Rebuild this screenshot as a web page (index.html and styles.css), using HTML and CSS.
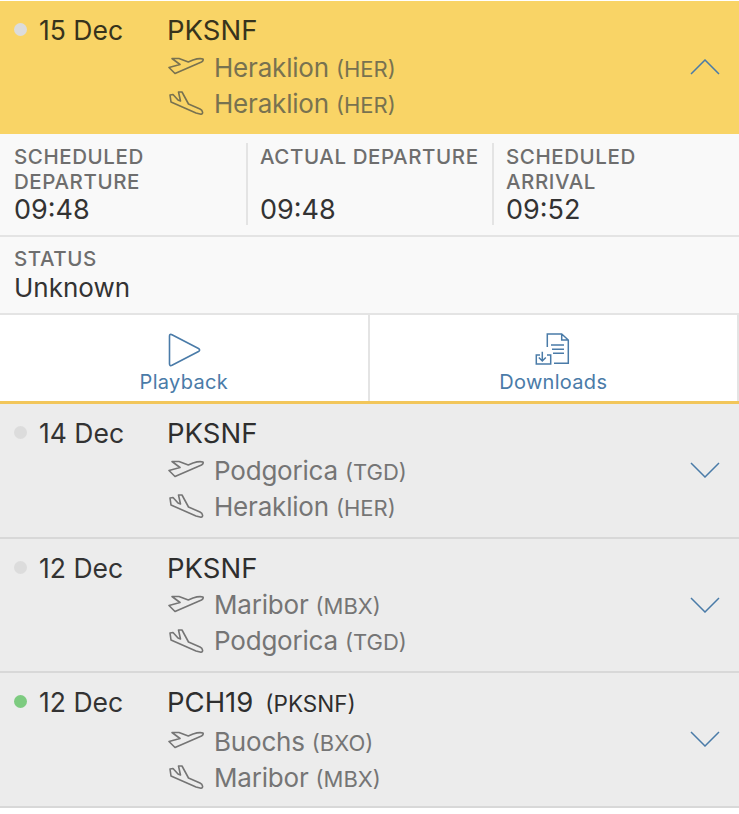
FILE: index.html
```html
<!DOCTYPE html>
<html lang="en">
<head>
<meta charset="utf-8">
<title>Flights</title>
<link rel="stylesheet" href="styles.css">
</head>
<body>
<svg class="defs" width="0" height="0" aria-hidden="true">
  <symbol id="dep" viewBox="0 0 36 20">
    <path d="M35 2 C32 1 28 2 25 3 L20.3 5 L11 1.5 L4 1.5 L12 7.5 L1 10.5 L7 16.5 L33.5 5 C35 4 35.5 3 35 2 Z" fill="none" stroke="currentColor" stroke-width="1.6" stroke-linejoin="round"/>
  </symbol>
  <symbol id="arr" viewBox="0 0 36 24">
    <path d="M2 4 L5 3.5 L10 9 L12.5 10 L10.5 1 L14 1 L20.5 13 L32 18 C35 19.5 35.5 23 33 23.2 L28 22 L3 11 Z" fill="none" stroke="currentColor" stroke-width="1.6" stroke-linejoin="round"/>
  </symbol>
  <symbol id="down" viewBox="0 0 30 16">
    <path d="M1 1 L15 15 L29 1" fill="none" stroke="currentColor" stroke-width="1.5"/>
  </symbol>
</svg>
<main class="list">
  <section class="flight open">
    <div class="when"><span class="dot grey"></span><span class="date">15 Dec</span></div>
    <div class="route">
      <div class="name">PKSNF</div>
      <div class="leg"><svg class="i-dep"><use href="#dep"/></svg><span class="city">Heraklion</span><span class="code">(HER)</span></div>
      <div class="leg"><svg class="i-arr"><use href="#arr"/></svg><span class="city">Heraklion</span><span class="code">(HER)</span></div>
    </div>
    <svg class="chev up"><use href="#down"/></svg>
  </section>
  <section class="times">
    <div class="time"><div class="label">SCHEDULED DEPARTURE</div><div class="value">09:48</div></div>
    <div class="time"><div class="label">ACTUAL DEPARTURE</div><div class="value">09:48</div></div>
    <div class="time"><div class="label">SCHEDULED ARRIVAL</div><div class="value">09:52</div></div>
  </section>
  <section class="status">
    <div class="label">STATUS</div>
    <div class="value">Unknown</div>
  </section>
  <section class="actions">
    <button class="action">
      <svg class="i-play" viewBox="0 0 34 34"><path d="M2.5 3 C2.5 1.5 3.5 1 5 1.7 L31.5 15.5 C33 16.3 33 17.7 31.5 18.5 L5 32.3 C3.5 33 2.5 32.5 2.5 31 Z" fill="none" stroke="currentColor" stroke-width="1.6" stroke-linejoin="round"/></svg>
      <span>Playback</span>
    </button>
    <button class="action">
      <svg class="i-doc" viewBox="0 0 36 34"><path d="M12.3 14 V1 H26.7 L33.3 7 V30.3 H19 M26.7 1 V7 H33.3 M16 12 H29 M17 16.3 H29 M18 20.3 H29 M5 22 H1.3 V31 H15.7 V22 H12 M7.3 18.7 V27.7 M3.8 24.5 L7.3 28 L10.8 24.5" fill="none" stroke="currentColor" stroke-width="1.5"/></svg>
      <span>Downloads</span>
    </button>
  </section>
  <section class="flight">
    <div class="when"><span class="dot grey"></span><span class="date">14 Dec</span></div>
    <div class="route">
      <div class="name">PKSNF</div>
      <div class="leg"><svg class="i-dep"><use href="#dep"/></svg><span class="city">Podgorica</span><span class="code">(TGD)</span></div>
      <div class="leg"><svg class="i-arr"><use href="#arr"/></svg><span class="city">Heraklion</span><span class="code">(HER)</span></div>
    </div>
    <svg class="chev"><use href="#down"/></svg>
  </section>
  <section class="flight">
    <div class="when"><span class="dot grey"></span><span class="date">12 Dec</span></div>
    <div class="route">
      <div class="name">PKSNF</div>
      <div class="leg"><svg class="i-dep"><use href="#dep"/></svg><span class="city">Maribor</span><span class="code">(MBX)</span></div>
      <div class="leg"><svg class="i-arr"><use href="#arr"/></svg><span class="city">Podgorica</span><span class="code">(TGD)</span></div>
    </div>
    <svg class="chev"><use href="#down"/></svg>
  </section>
  <section class="flight">
    <div class="when"><span class="dot green"></span><span class="date">12 Dec</span></div>
    <div class="route">
      <div class="name">PCH19<span class="alt">(PKSNF)</span></div>
      <div class="leg"><svg class="i-dep"><use href="#dep"/></svg><span class="city">Buochs</span><span class="code">(BXO)</span></div>
      <div class="leg"><svg class="i-arr"><use href="#arr"/></svg><span class="city">Maribor</span><span class="code">(MBX)</span></div>
    </div>
    <svg class="chev"><use href="#down"/></svg>
  </section>
</main>
</body>
</html>
```
FILE: styles.css
```css
* { box-sizing: border-box; }
html, body { margin: 0; padding: 0; background: #fff; }
body { font-family: Inter, "Liberation Sans", sans-serif; color: #333; }
.defs { position: absolute; }
.list { padding-top: 1px; width: 739px; }

.flight {
  display: flex;
  height: 134.5px;
  background: #ececec;
  border-bottom: 2px solid #d8d8d8;
  padding-left: 14px;
  padding-top: 12px;
}
.flight.open { background: #f9d466; border-bottom: 0; height: 133px; }
.when { display: flex; width: 153px; height: 34px; align-items: center; flex: none; }
.dot { width: 13px; height: 13px; border-radius: 50%; margin-right: 12px; margin-top: -1px; flex: none; }
.dot.grey { background: #dcdcdc; }
.dot.green { background: #7dcb80; }
.date { font-size: 26.5px; line-height: 34px; color: #333; }
.route { flex: 1; }
.name { font-size: 27.5px; line-height: 34px; color: #2e2e2e; margin-bottom: 2px; }
.alt { font-size: 22.5px; margin-left: 12px; }
.leg { display: flex; align-items: center; height: 36px; font-size: 26px; letter-spacing: -0.2px; color: #757575; }
.open .leg { color: #787250; }
.open .name, .open .date { color: #37331c; }
.leg svg { margin: 0 10px 0 1px; flex: none; }
.code { font-size: 22px; letter-spacing: 0; margin-left: 7px; padding-top: 3px; }
.i-dep { width: 36px; height: 20px; }
.i-arr { width: 36px; height: 24px; }
.chev {
  flex: none;
  margin: 46px 19px 0 0;
  width: 30px;
  height: 16px;
  color: #4a7ba8;
}
.chev.up { transform: scaleY(-1); }

.times {
  display: flex;
  height: 103px;
  background: #f9f9f9;
  border-bottom: 2px solid #e4e4e4;
  padding: 9px 0 10px;
}
.time {
  flex: 1;
  display: flex;
  flex-direction: column;
  justify-content: space-between;
  padding-left: 12px;
  border-left: 2px solid #e4e4e4;
}
.time:first-child { border-left: 0; width: 246px; flex: none; padding-left: 14px; }
.time:nth-child(2) { width: 246px; flex: none; }
.label { font-size: 20.5px; line-height: 25px; font-weight: 500; color: #6e6e6e; letter-spacing: 0.58px; }
.time .label { max-width: 222px; margin-top: 1px; }
.value { font-size: 26px; line-height: 32px; color: #333; }
.time .value { font-size: 27px; line-height: 30px; }
.status {
  height: 78px;
  background: #f9f9f9;
  border-bottom: 2px solid #e4e4e4;
  padding: 9px 14px 0;
}
.status .label { margin-bottom: 1px; }
.actions {
  display: flex;
  height: 89px;
  background: #fff;
  border-bottom: 3px solid #f2c65a;
}
.action {
  flex: 1;
  border: 0;
  background: none;
  padding: 18px 0 0;
  display: flex;
  flex-direction: column;
  align-items: center;
  font: inherit;
  font-size: 20px;
  color: #4a7ba8;
  letter-spacing: 0.3px;
}
.action span { margin-top: 2px; line-height: 27px; }
.action + .action { border-left: 2px solid #e4e4e4; border-right: 2px solid #e4e4e4; }
.i-play { width: 34px; height: 34px; }
.i-doc { width: 36px; height: 34px; }
```
